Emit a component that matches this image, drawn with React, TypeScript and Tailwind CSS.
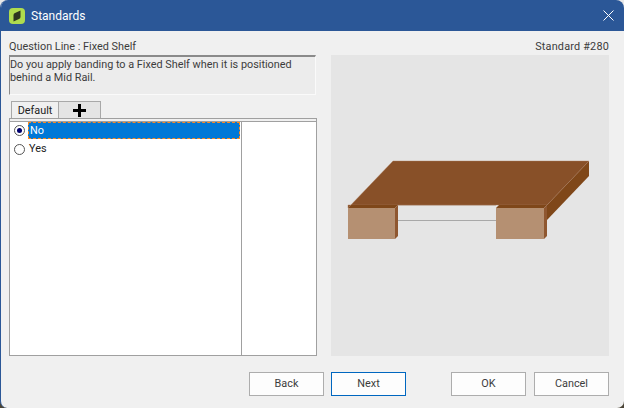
export default function App() {
  return (
    <div className="w-[624px] h-[408px] bg-[linear-gradient(#e8e8e8_50%,#4a4436_50%)] overflow-hidden font-['Roboto','Open_Sans',sans-serif] text-[10.85px] text-[#3c3c3c]">
      <div className="w-full h-full rounded-t-[8px] rounded-b-[7px] overflow-hidden bg-[#f0f0f0] border-l border-[#2b5797] flex flex-col">
        <div className="h-[31px] bg-[#2b5797] flex items-center shrink-0 -ml-px">
          <div className="ml-[9px] w-4 h-4 rounded-[4px] bg-[#afdc4e] flex items-center justify-center">
            <svg width="10" height="12" viewBox="0 0 10 12"><path d="M1.5 5 Q1.5 3.5 3 3 L8.5 0.5 L8.5 7 Q8.5 8.5 7 9 L1.5 11.5 Z" fill="#2c3520" /></svg>
          </div>
          <span className="ml-[6px] text-[12px] text-white">Standards</span>
          <svg className="ml-auto mr-[10px]" width="11" height="11" viewBox="0 0 11 11"><path d="M0.5 0.5 L10.5 10.5 M10.5 0.5 L0.5 10.5" stroke="#fff" strokeWidth="1" /></svg>
        </div>
        <div className="flex-1 flex flex-col pl-2 pr-[15px] pt-2">
          <div className="flex gap-[14px] h-[317px]">
            <div className="w-[308px] flex flex-col shrink-0">
              <div className="h-[16px] leading-[16px]">Question Line : Fixed Shelf</div>
              <div className="h-[40px] w-[307px] bg-[#ececec] border-t-2 border-l border-[#8a8a8a] leading-[13px] pt-px border-r border-b [border-right-color:#fafafa] [border-bottom-color:#fafafa]">
                Do you apply banding to a Fixed Shelf when it is positioned behind a Mid Rail.
              </div>
              <div className="flex h-[17px] mt-[6px] ml-[2px] items-end">
                <div className="w-[48px] h-[17px] bg-[#f0f0f0] border border-b-0 border-[#a8a8a8] text-center text-[#222] leading-[17px]">Default</div>
                <div className="w-[42px] h-[17px] bg-[#e4e4e4] border border-l-0 border-b-0 border-[#a8a8a8] flex items-center justify-center">
                  <svg width="13" height="13" viewBox="0 0 13 13"><path d="M0 6.5 H13 M6.5 0 V13" stroke="#000" strokeWidth="3" /></svg>
                </div>
              </div>
              <div className="flex-1 border border-[#a0a0a0] pt-[2px] bg-[#f0f0f0]">
                <div className="h-full bg-white border-t border-[#a0a0a0] flex">
                  <div className="w-[232px] border-r border-[#a0a0a0]">
                    <div className="flex items-center h-[17px] pl-[4px]">
                      <div className="w-[11px] h-[11px] rounded-full border border-[#555] flex items-center justify-center shrink-0">
                        <div className="w-[5px] h-[5px] rounded-full bg-[#00006e]" />
                      </div>
                      <div className="ml-[3px] w-[212px] h-[17px] bg-[#0078d7] border border-dashed border-[#ff8a1e] text-white pl-px leading-[15px]">No</div>
                    </div>
                    <div className="flex items-center h-[17px] pl-[4px] mt-[2px]">
                      <div className="w-[11px] h-[11px] rounded-full border border-[#555] bg-white shrink-0" />
                      <span className="ml-[4px] text-[#222]">Yes</span>
                    </div>
                  </div>
                </div>
              </div>
            </div>
            <div className="flex-1 flex flex-col">
              <div className="h-[16px] leading-[16px] text-right tracking-[0.2px]">Standard #280</div>
              <div className="flex-1 bg-[#e5e5e5]">
                <svg width="278" height="301" viewBox="331 55 278 301">
                  <path d="M589 161 L589 176 L547 220 L547 205 Z" fill="#7f4719" />
                  <path d="M348 208 L393 161 L589 161 L547 205 L348 205 Z" fill="#885028" stroke="#a8795a" strokeWidth="0.4" />
                  <rect x="398" y="205" width="98" height="1" fill="#c4b0a2" />
                  <rect x="398" y="220" width="98" height="1" fill="#a8a8a8" />
                  <path d="M348 208 L351 205 L398 205 L395 208 Z" fill="#7f4719" />
                  <path d="M496 208 L499 205 L547 205 L544 208 Z" fill="#7f4719" />
                  <rect x="348" y="208" width="47" height="31" fill="#b59072" />
                  <path d="M395 208 L398 205 L398 236 L395 239 Z" fill="#8f5730" />
                  <rect x="496" y="208" width="48" height="31" fill="#b59072" />
                  <path d="M544 208 L547 205 L547 236 L544 239 Z" fill="#8f5730" />
                </svg>
              </div>
            </div>
          </div>
          <div className="flex mt-[16px] h-[24px]">
            <button className="ml-[240px] w-[75px] h-[24px] pt-px bg-[#fdfdfd] border border-[#adadad]">Back</button>
            <button className="ml-[7px] w-[75px] h-[24px] pt-px bg-[#fdfdfd] border border-[#0067c0]">Next</button>
            <button className="ml-[45px] w-[75px] h-[24px] pt-px bg-[#fdfdfd] border border-[#adadad]">OK</button>
            <button className="ml-[8px] w-[75px] h-[24px] pt-px bg-[#fdfdfd] border border-[#adadad]">Cancel</button>
          </div>
        </div>
      </div>
    </div>
  );
}
